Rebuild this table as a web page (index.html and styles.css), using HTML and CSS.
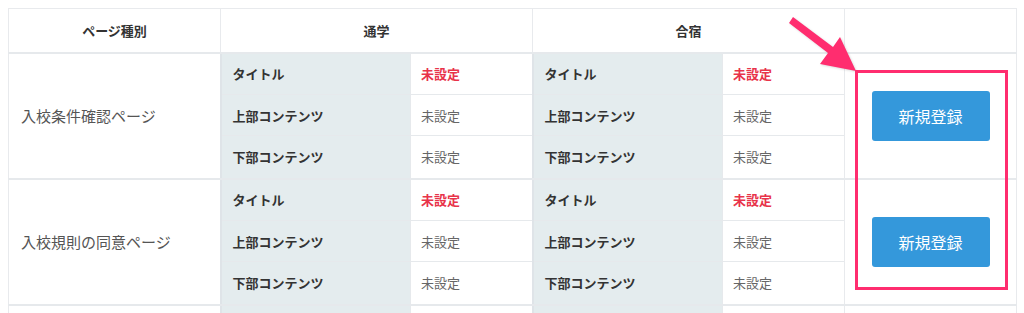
FILE: index.html
```html
<!DOCTYPE html>
<html lang="ja">

<head>
    <meta charset="UTF-8">
    <meta name="viewport" content="width=device-width, initial-scale=1.0">
    <title>ページ設定一覧</title>
    <link rel="stylesheet" href="styles.css">
</head>

<body>
    <table class="pages">
        <colgroup>
            <col class="col-name">
            <col class="col-mode">
            <col class="col-mode">
            <col class="col-action">
        </colgroup>
        <thead>
            <tr>
                <th>ページ種別</th>
                <th>通学</th>
                <th>合宿</th>
                <th></th>
            </tr>
        </thead>
        <tbody>
            <tr>
                <td class="page-name">入校条件確認ページ</td>
                <td class="nested">
                    <table class="fields">
                        <tr><td class="label">タイトル</td><td class="value unset">未設定</td></tr>
                        <tr><td class="label">上部コンテンツ</td><td class="value">未設定</td></tr>
                        <tr><td class="label">下部コンテンツ</td><td class="value">未設定</td></tr>
                    </table>
                </td>
                <td class="nested">
                    <table class="fields">
                        <tr><td class="label">タイトル</td><td class="value unset">未設定</td></tr>
                        <tr><td class="label">上部コンテンツ</td><td class="value">未設定</td></tr>
                        <tr><td class="label">下部コンテンツ</td><td class="value">未設定</td></tr>
                    </table>
                </td>
                <td class="action"><button class="btn-new">新規登録</button></td>
            </tr>
            <tr>
                <td class="page-name">入校規則の同意ページ</td>
                <td class="nested">
                    <table class="fields">
                        <tr><td class="label">タイトル</td><td class="value unset">未設定</td></tr>
                        <tr><td class="label">上部コンテンツ</td><td class="value">未設定</td></tr>
                        <tr><td class="label">下部コンテンツ</td><td class="value">未設定</td></tr>
                    </table>
                </td>
                <td class="nested">
                    <table class="fields">
                        <tr><td class="label">タイトル</td><td class="value unset">未設定</td></tr>
                        <tr><td class="label">上部コンテンツ</td><td class="value">未設定</td></tr>
                        <tr><td class="label">下部コンテンツ</td><td class="value">未設定</td></tr>
                    </table>
                </td>
                <td class="action"><button class="btn-new">新規登録</button></td>
            </tr>
            <tr class="pending">
                <td class="page-name"></td>
                <td class="nested">
                    <table class="fields">
                        <tr><td class="label"></td><td class="value"></td></tr>
                    </table>
                </td>
                <td class="nested">
                    <table class="fields">
                        <tr><td class="label"></td><td class="value"></td></tr>
                    </table>
                </td>
                <td class="action"></td>
            </tr>
        </tbody>
    </table>

    <!-- callout: arrow + frame around the register buttons -->
    <svg class="callout" width="1024" height="313" viewBox="0 0 1024 313">
        <polygon class="arrow" points="789,23 793,17 833,47 840,37 856,71 820,64 828,53"/>
        <rect class="frame" x="856.5" y="71.5" width="150" height="217"/>
    </svg>
</body>

</html>
```

FILE: styles.css
```css
* {
    box-sizing: border-box;
}

body {
    margin: 0;
    padding: 8px;
    background: #fff;
    font-family: "Noto Sans CJK JP", "Noto Sans", sans-serif;
    color: #333;
    overflow: hidden;
    height: 313px;
    position: relative;
}

.pages {
    width: 1008px;
    border-collapse: collapse;
    table-layout: fixed;
}

.col-name {
    width: 212px;
}

.col-mode {
    width: 312px;
}

.col-action {
    width: 172px;
}

.pages th {
    height: 44px;
    font-size: 13px;
    font-weight: bold;
    color: #333;
    text-align: center;
    border: 1px solid #e8eaed;
    border-bottom: 2px solid #e6e9ec;
}

.pages > tbody > tr > td {
    border: 1px solid #e8eaed;
    border-bottom: 2px solid #e6e9ec;
    padding: 0;
    vertical-align: middle;
}

.pages td.page-name {
    padding-left: 12px;
    font-size: 15px;
    color: #555;
}

.pages td.nested {
    border-left: 2px solid #dfe4e8;
}

.fields {
    width: 100%;
    border-collapse: collapse;
    table-layout: fixed;
}

.fields td {
    height: 41px;
    padding: 0;
    font-size: 13px;
    border-bottom: 1px solid #e6e9ec;
}

.fields tr:last-child td {
    height: 42px;
    border-bottom: none;
}

.fields .label {
    width: 189px;
    padding-left: 11px;
    background: #e4ecee;
    font-weight: bold;
    color: #333;
    border-right: 1px solid #e6e9ec;
}

.fields .value {
    padding-left: 10px;
    color: #666;
}

.fields .value.unset {
    color: #e8334a;
    font-weight: bold;
}

.pages td.action {
    text-align: center;
}

.btn-new {
    width: 118px;
    height: 50px;
    border: none;
    border-radius: 3px;
    background: #3498db;
    color: #fff;
    font-family: inherit;
    font-size: 16px;
    cursor: pointer;
}

.btn-new:hover {
    filter: brightness(1.1);
}

.callout {
    position: absolute;
    top: 0;
    left: 0;
    pointer-events: none;
}

.callout .arrow {
    fill: #ff2d6f;
    filter: drop-shadow(1px 1px 1px rgba(0, 0, 0, 0.15));
}

.callout .frame {
    fill: none;
    stroke: #ff2d6f;
    stroke-width: 3;
}
```
